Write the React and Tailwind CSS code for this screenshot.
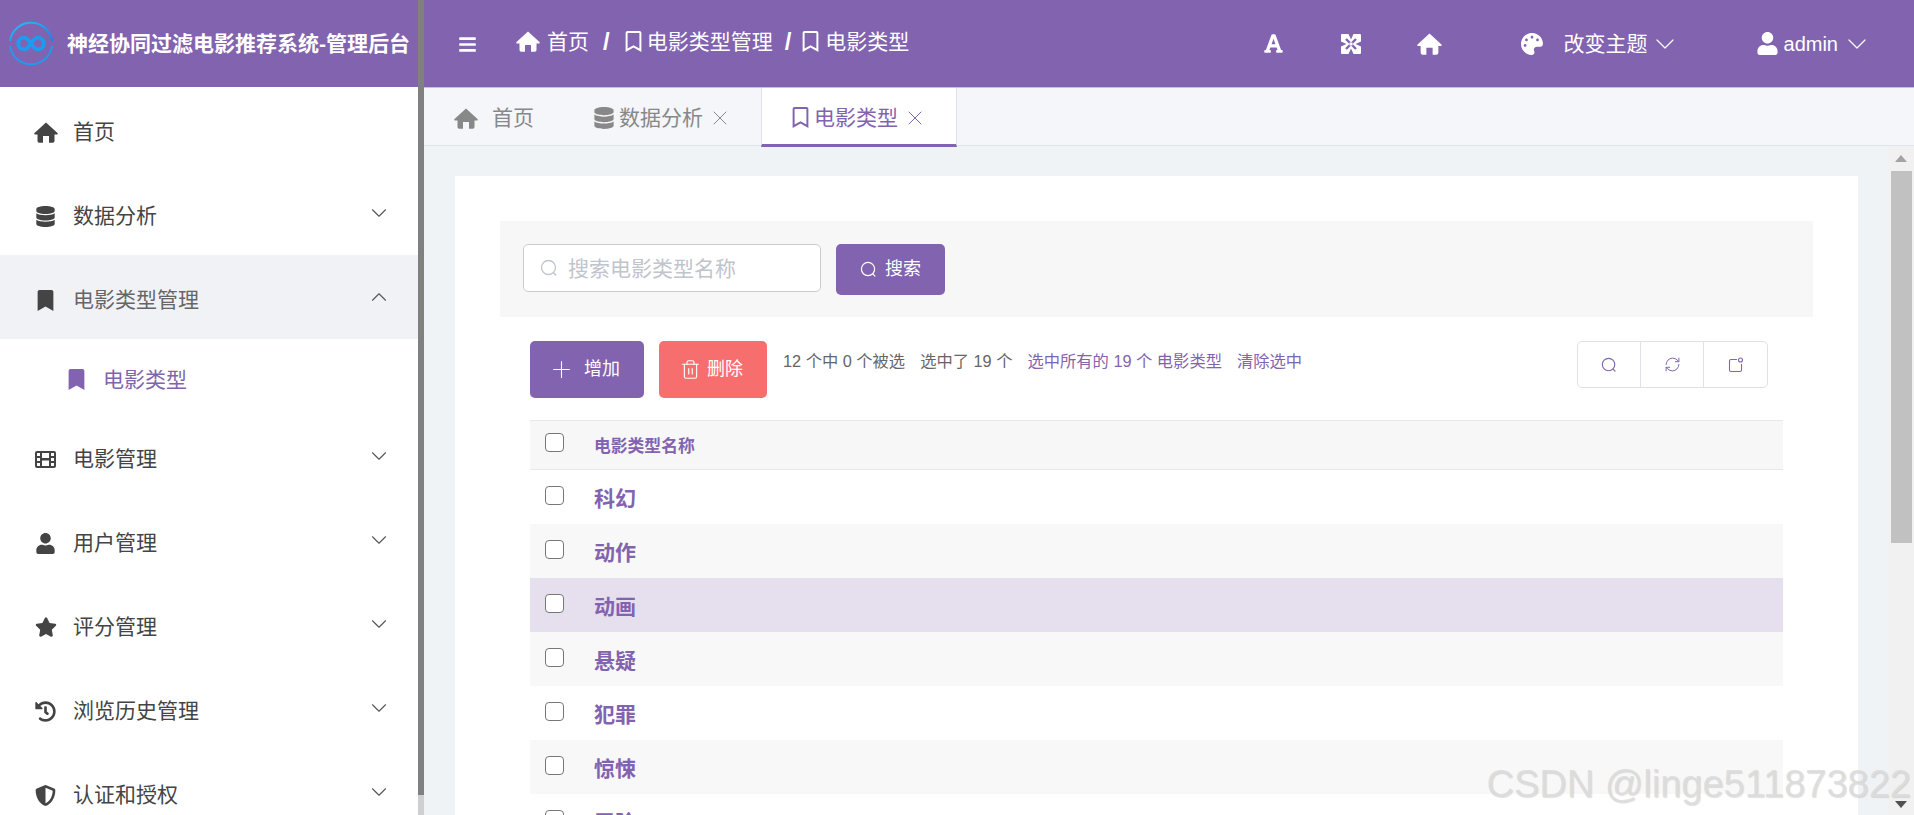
import {
  FaBars,
  FaBookmark,
  FaDatabase,
  FaFont,
  FaHistory,
  FaPalette,
  FaRegBookmark,
  FaShieldAlt,
  FaStar,
  FaUser,
} from "react-icons/fa";
import { ChevronDown, ChevronUp, Plus, RefreshCw, Trash2, X } from "lucide-react";

const HomeIcon = ({ className }) => (
  <svg viewBox="0 0 24 21" fill="currentColor" className={className}>
    <path d="M12 .5L23.500 11q.8 1.100-.5 1.500h-2.500V19q0 1.700-1.700 1.700H15V14H9v6.700H5.200q-1.700 0-1.700-1.700v-6.500H1q-1.300-.4-.5-1.500z" />
  </svg>
);

const ExpandIcon = ({ className }) => (
  <svg viewBox="0 0 20 20" className={className}>
    <rect width="20" height="20" rx="1" fill="#fff" />
    <path d="M5 5l10 10M15 5L5 15" stroke="#8263af" strokeWidth="2.400" />
    <path d="M10 5.500L7.500 0h5zM10 14.500L7.500 20h5zM5.500 10L0 7.500v5zM14.500 10L20 7.500v5z" fill="#8263af" />
    <rect x="8.500" y="8.500" width="3" height="3" fill="#fff" />
  </svg>
);

const FilmIcon = ({ className }) => (
  <svg viewBox="0 0 21 17" className={className}>
    <path
      fillRule="evenodd"
      fill="currentColor"
      d="M2 0h17a2 2 0 0 1 2 2v13a2 2 0 0 1-2 2H2a2 2 0 0 1-2-2V2a2 2 0 0 1 2-2zM2 2v3h3V2zM2 7v3h3V7zM2 12v3h3v-3zM16 2v3h3V2zM16 7v3h3V7zM16 12v3h3v-3zM7 2v5h7V2zM7 9.500V15h7V9.500z"
    />
  </svg>
);

const menu = [
  { name: "首页", icon: () => <HomeIcon className="w-[24px] h-[21px]" />, noArrow: true },
  { name: "数据分析", icon: () => <FaDatabase size={21} /> },
  { name: "电影类型管理", icon: () => <FaBookmark size={21} />, open: true },
];

const menuAfter = [
  { name: "电影管理", icon: () => <FilmIcon className="w-[21px] h-[17px]" /> },
  { name: "用户管理", icon: () => <FaUser size={21} /> },
  { name: "评分管理", icon: () => <FaStar size={22} /> },
  { name: "浏览历史管理", icon: () => <FaHistory size={21} /> },
  { name: "认证和授权", icon: () => <FaShieldAlt size={21} /> },
];

const genres = ["科幻", "动作", "动画", "悬疑", "犯罪", "惊悚", "冒险"];

const SearchIcon = ({ className }) => (
  <svg viewBox="0 0 18 18" fill="none" stroke="currentColor" strokeWidth="1.3" className={className}>
    <circle cx="8.500" cy="8.500" r="7" />
    <path d="M13.600 13.600l2.200 2.400" strokeLinecap="round" />
  </svg>
);

const BoxDotIcon = ({ className }) => (
  <svg viewBox="0 0 16 16" fill="none" stroke="currentColor" strokeWidth="1.100" className={className}>
    <path d="M9 2.500H3a1.500 1.500 0 0 0-1.500 1.500v9A1.500 1.500 0 0 0 3 14.500h9a1.500 1.500 0 0 0 1.500-1.500V7" />
    <circle cx="12.500" cy="3" r="2" />
  </svg>
);

const Logo = () => (
  <svg viewBox="0 0 46 46" fill="none" className="w-[46px] h-[45px] shrink-0">
    <defs>
      <linearGradient id="logoBlue" x1="0" y1="0" x2="1" y2="1">
        <stop offset="0" stopColor="#27c0f5" />
        <stop offset="1" stopColor="#1a7ff0" />
      </linearGradient>
    </defs>
    <path d="M1.500 20.500A21.700 21.700 0 0 1 44.500 20.500" stroke="url(#logoBlue)" strokeWidth="2" />
    <path d="M1.500 25.500A21.700 21.700 0 0 0 44.500 25.500" stroke="#1d9bf0" strokeWidth="2" />
    <path
      d="M23 23c-2.500-3.500-4-6-7-6a6 6 0 0 0 0 12c3 0 4.500-2.500 7-6s4-6 7-6a6 6 0 0 1 0 12c-3 0-4.500-2.500-7-6z"
      stroke="#1d9bf0"
      strokeWidth="4"
    />
  </svg>
);

const MenuItem = ({ item }) => {
  const Icon = item.icon;
  return (
    <div className={`shrink-0 flex items-center pl-[33px] pr-[26px] pt-[6px] h-[84px] text-[21px] ${item.open ? "bg-[#f1f2f6] text-[#666]" : "text-[#444]"}`}>
      <span className="w-[25px] flex justify-center text-[#444]">
        <Icon />
      </span>
      <span className="ml-[15px]">{item.name}</span>
      {!item.noArrow &&
        (item.open ? (
          <ChevronUp size={26} strokeWidth={1} className="ml-auto -mt-[6px] text-[#555]" />
        ) : (
          <ChevronDown size={26} strokeWidth={1} className="ml-auto -mt-[6px] text-[#555]" />
        ))}
    </div>
  );
};

const Sidebar = () => (
  <aside className="w-[418px] shrink-0 flex flex-col bg-white">
    <div className="h-[87px] shrink-0 bg-[#8263af] flex items-center pl-[8px] gap-[13px]">
      <Logo />
      <span className="text-white font-bold text-[21px] whitespace-nowrap">神经协同过滤电影推荐系统-管理后台</span>
    </div>
    {menu.map((item) => (
      <MenuItem key={item.name} item={item} />
    ))}
    <div className="shrink-0 flex items-center h-[75px] pl-[66px] pt-[6px] text-[21px] text-[#8263af]">
      <FaBookmark size={21} />
      <span className="ml-[16px]">电影类型</span>
    </div>
    {menuAfter.map((item) => (
      <MenuItem key={item.name} item={item} />
    ))}
  </aside>
);

const TopBar = () => (
  <header className="h-[87px] shrink-0 bg-[#8263af] text-white flex items-center pl-[34px] pr-[41px]">
    <FaBars size={19} className="mt-[2px]" />
    <nav className="ml-[39px] flex items-center text-[21px] -mt-[4px]">
      <HomeIcon className="w-[24px] h-[21px]" />
      <span className="ml-[7px]">首页</span>
      <span className="ml-[14px] font-bold text-[24px] leading-none">/</span>
      <FaRegBookmark size={21} className="ml-[13px]" />
      <span className="ml-[3px]">电影类型管理</span>
      <span className="ml-[12px] font-bold text-[24px] leading-none">/</span>
      <FaRegBookmark size={21} className="ml-[9px]" />
      <span className="ml-[4px]">电影类型</span>
    </nav>
    <div className="ml-auto flex items-center">
      <FaFont size={21} />
      <ExpandIcon className="w-[20px] h-[20px] ml-[57px]" />
      <HomeIcon className="w-[25px] h-[22px] ml-[56px]" />
      <FaPalette size={22} className="ml-[79px]" />
      <span className="ml-[21px] text-[21px]">改变主题</span>
      <ChevronDown size={32} strokeWidth={0.9} className="ml-[1px]" />
      <FaUser size={23} className="ml-[75px]" />
      <span className="ml-[5px] text-[20px]">admin</span>
      <ChevronDown size={32} strokeWidth={0.9} className="ml-[3px]" />
    </div>
  </header>
);

const Tabs = () => (
  <div className="h-[59px] shrink-0 bg-[#f4f6fa] border-t border-t-[#c9bfe0] border-b border-b-[#e0e5ea] flex text-[21px] text-[#888]">
    <div className="flex items-center pl-[30px] pt-[3px]">
      <HomeIcon className="w-[24px] h-[21px]" />
      <span className="ml-[14px]">首页</span>
    </div>
    <div className="flex items-center ml-[59px] pt-[3px]">
      <FaDatabase size={22} />
      <span className="ml-[4px]">数据分析</span>
      <X size={24} strokeWidth={1} className="ml-[5px]" />
    </div>
    <div className="ml-[29px] w-[196px] h-[59px] bg-white border-x border-x-[#e0e2ec] border-b-[3px] border-b-[#8263af] flex items-center pl-[28px] pt-[3px] text-[#8263af]">
      <FaRegBookmark size={21} />
      <span className="ml-[3px]">电影类型</span>
      <X size={24} strokeWidth={1} className="ml-[5px]" />
    </div>
  </div>
);

const SearchBar = () => (
  <div className="h-[96px] bg-[#f7f7f7] flex items-start pt-[23px] pl-[23px]">
    <div className="w-[298px] h-[48px] bg-white border border-[#ccc] rounded-[5px] flex items-center pl-[16px]">
      <SearchIcon className="w-[18px] h-[18px] text-[#c0c4cc]" />
      <span className="ml-[10px] pt-[2px] text-[21px] text-[#c0c4cc]">搜索电影类型名称</span>
    </div>
    <button className="ml-[15px] w-[109px] h-[51px] bg-[#8263af] rounded-[5px] text-white text-[18px] flex items-center justify-center gap-[8px]">
      <SearchIcon className="w-[17px] h-[17px]" />
      搜索
    </button>
  </div>
);

const Actions = () => (
  <div className="mt-[24px] mx-[30px] flex items-start">
    <button className="w-[114px] h-[57px] bg-[#8263af] rounded-[5px] text-white text-[18px] flex items-center pl-[18px] gap-[9px]">
      <Plus size={27} strokeWidth={1} />
      增加
    </button>
    <button className="ml-[15px] w-[108px] h-[57px] bg-[#f76e6e] rounded-[5px] text-white text-[18px] flex items-center pl-[21px] gap-[6px]">
      <Trash2 size={21} strokeWidth={1.3} />
      删除
    </button>
    <div className="ml-[16px] mt-[8px] flex gap-[15px] text-[16.300px] text-[#666]">
      <span>12 个中 0 个被选</span>
      <span>选中了 19 个</span>
      <a className="text-[#8263af]">选中所有的 19 个 电影类型</a>
      <a className="text-[#8263af]">清除选中</a>
    </div>
    <div className="ml-auto mr-[15px] w-[191px] h-[47px] border border-[#e0dfea] rounded-[5px] flex text-[#8263af]">
      <div className="w-[63px] flex items-center justify-center border-r border-r-[#e0dfea]">
        <SearchIcon className="w-[16px] h-[16px]" />
      </div>
      <div className="w-[63px] flex items-center justify-center border-r border-r-[#e0dfea]">
        <RefreshCw size={17} strokeWidth={1.4} />
      </div>
      <div className="flex-1 flex items-center justify-center">
        <BoxDotIcon className="w-[16px] h-[16px]" />
      </div>
    </div>
  </div>
);

const Checkbox = () => (
  <input
    type="checkbox"
    className="appearance-none w-[19px] h-[19px] bg-white border-[1.500px] border-[#777] rounded-[4px] shrink-0 self-start"
  />
);

const rowBg = (i) => {
  if (i === 2) return "bg-[#e6dfee]";
  return i % 2 === 0 ? "bg-white" : "bg-[#f8f8f8]";
};

const GenreTable = () => (
  <div className="mt-[22px] mx-[30px] text-[#8263af] font-bold">
    <div className="h-[50px] bg-[#f7f7f7] border-y border-y-[#e8e8e8] flex items-center pl-[15px] [&>input]:mt-[12px]">
      <Checkbox />
      <span className="ml-[30px] text-[16.800px] pt-[3px]">电影类型名称</span>
    </div>
    {genres.map((g, i) => (
      <div key={g} className={`h-[54px] flex items-center pl-[15px] [&>input]:mt-[16px] ${rowBg(i)}`}>
        <Checkbox />
        <span className="ml-[30px] text-[21px] pt-[4px]">{g}</span>
      </div>
    ))}
  </div>
);

const App = () => (
  <div className="relative w-[1914px] h-[815px] overflow-hidden flex bg-white font-['Liberation_Sans','Noto_Sans_CJK_SC',sans-serif]">
    <Sidebar />
    <div className="w-[6px] shrink-0 flex flex-col">
      <div className="flex-1 bg-[#808080]" />
      <div className="h-[20px] bg-[#cfcfcf]" />
    </div>
    <div className="flex-1 min-w-0 flex flex-col bg-[#eff3f6]">
      <TopBar />
      <Tabs />
      <div className="flex-1 min-h-0 flex">
        <main className="flex-1 min-w-0 pl-[31px] pr-[30px] pt-[30px] overflow-hidden">
          <div className="bg-white h-[900px] pt-[45px] px-[45px]">
            <SearchBar />
            <Actions />
            <GenreTable />
          </div>
        </main>
        {/* page scrollbar */}
        <div className="w-[26px] shrink-0 bg-[#f1f1f1] flex flex-col items-center">
          <div className="h-[25px] flex items-center justify-center">
            <div className="w-0 h-0 border-x-[6px] border-x-transparent border-b-[7px] border-b-[#a3a3a3]" />
          </div>
          <div className="w-[21px] h-[372px] bg-[#c1c1c1]" />
          <div className="mt-auto mb-[7px] w-0 h-0 border-x-[6px] border-x-transparent border-t-[7px] border-t-[#505050]" />
        </div>
      </div>
    </div>
    {/* CSDN watermark */}
    <div className="absolute right-[3px] bottom-[12px] text-[38px] leading-none whitespace-nowrap text-[#dcdcdc]/90 [text-shadow:1px_1px_1px_rgba(0,0,0,0.12)]">
      CSDN @linge511873822
    </div>
  </div>
);

export default App;
